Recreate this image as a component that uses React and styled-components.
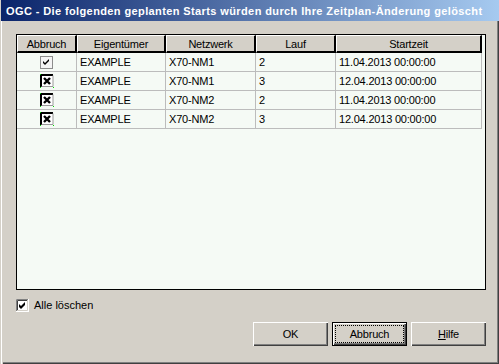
import React from 'react'
import styled, { createGlobalStyle } from 'styled-components'

const GlobalStyle = createGlobalStyle`
  html, body {
    margin: 0;
    padding: 0;
    background: #d4d0c8;
  }
  body {
    font-family: "Liberation Sans", Arial, sans-serif;
    font-size: 11px;
    color: #000;
  }
`

const Window = styled.div`
  width: 499px;
  height: 364px;
  box-sizing: border-box;
  display: flex;
  flex-direction: column;
  background: #d4d0c8;
  box-shadow: inset 1px 0 #d4d0c8, inset 2px 0 #fff, inset 3px 0 #d4d0c8,
    inset -1px -1px #404040, inset -2px -2px #808080;
  overflow: hidden;
`

const TitleBar = styled.div`
  height: 21px;
  flex: none;
  display: flex;
  align-items: center;
  padding-left: 5px;
  margin-left: 1px;
  background: linear-gradient(to right, #0a246a, #a6caf0);
  color: #fff;
  font-weight: bold;
  font-size: 11px;
  letter-spacing: 0.39px;
  white-space: nowrap;
`

const Body = styled.div`
  flex: 1;
  display: flex;
  flex-direction: column;
  padding: 13px 13px 0 16px;
`

const GridFrame = styled.div`
  width: 470px;
  height: 256px;
  box-sizing: border-box;
  border: 1px solid #000;
  background: #f5faf5;
  overflow: hidden;
`

const Table = styled.table`
  border-collapse: separate;
  border-spacing: 0;
  table-layout: fixed;
  width: 465px;
`

const HeadCell = styled.th`
  height: 15px;
  padding: 0;
  background: #d4d0c8;
  border-top: 1px solid #fff;
  border-left: 1px solid #fff;
  border-right: 2px solid #000;
  border-bottom: 2px solid #000;
  font-weight: normal;
  text-align: center;
  letter-spacing: -0.2px;
  white-space: nowrap;
`

const Cell = styled.td`
  height: 18px;
  padding: 0 0 0 ${(p) => (p.$center ? 0 : 3)}px;
  border-right: 1px solid #bcbcbc;
  border-bottom: 1px solid #bcbcbc;
  text-align: ${(p) => (p.$center ? 'center' : 'left')};
  letter-spacing: -0.2px;
  white-space: nowrap;
  vertical-align: middle;
  line-height: 0;

  & > span {
    line-height: 13px;
  }
  & > svg {
    vertical-align: middle;
  }
`

const OptionRow = styled.label`
  display: flex;
  align-items: center;
  gap: 5px;
  margin-top: 8px;
  height: 14px;
`

const ButtonRow = styled.div`
  display: flex;
  justify-content: flex-end;
  gap: 4px;
  margin-top: 10px;
`

const Button = styled.button`
  width: 75px;
  height: 24px;
  box-sizing: border-box;
  padding: 0;
  font-family: "Liberation Sans", Arial, sans-serif;
  font-size: 11px;
  letter-spacing: -0.2px;
  color: #000;
  background: #d4d0c8;
  border: none;
  position: relative;
  box-shadow: ${(p) =>
    p.$default
      ? 'inset 1px 1px #000, inset -1px -1px #000, inset 2px 2px #fff, inset -2px -2px #404040, inset -3px -3px #808080'
      : 'inset 1px 1px #fff, inset -1px -1px #404040, inset -2px -2px #808080'};

  u {
    text-decoration: underline;
  }
`

const FocusRing = styled.span`
  display: flex;
  align-items: center;
  justify-content: center;
  position: absolute;
  inset: 4px;
  outline: 1px dotted #000;
`

const rows = [
  { mark: 'check', owner: 'EXAMPLE', net: 'X70-NM1', lauf: '2', start: '11.04.2013 00:00:00' },
  { mark: 'cross', owner: 'EXAMPLE', net: 'X70-NM1', lauf: '3', start: '12.04.2013 00:00:00' },
  { mark: 'cross', owner: 'EXAMPLE', net: 'X70-NM2', lauf: '2', start: '11.04.2013 00:00:00' },
  { mark: 'cross', owner: 'EXAMPLE', net: 'X70-NM2', lauf: '3', start: '12.04.2013 00:00:00' },
]

const GreyCheck = () => (
  <svg width="13" height="13" viewBox="0 0 13 13">
    <rect x="0.5" y="0.5" width="12" height="12" fill="#f4f4f4" stroke="#8c8c8c" />
    <path d="M3 5 L5 7 L9 3 L9 5 L5 9 L3 7 Z" fill="#000" />
  </svg>
)

const CrossCheck = () => (
  <svg width="14" height="14" viewBox="0 0 14 14">
    <rect x="1" y="1" width="12" height="12" fill="#fff" />
    <path d="M1 13 V1 H13" fill="none" stroke="#000" strokeWidth="2" />
    <path d="M13 1.5 V12.5 H1.5" fill="none" stroke="#9a9a9a" strokeWidth="1" />
    <path d="M4 4 L10 10 M10 4 L4 10" stroke="#000" strokeWidth="2.4" />
    <rect x="0" y="0" width="1" height="1" fill="#00e000" />
    <rect x="0" y="13" width="1" height="1" fill="#00e000" />
    <rect x="13" y="13" width="1" height="1" fill="#00e000" />
  </svg>
)

const SunkenCheck = () => (
  <svg width="13" height="13" viewBox="0 0 13 13">
    <rect width="13" height="13" fill="#fff" />
    <path d="M0.5 12 V0.5 H12" fill="none" stroke="#808080" />
    <path d="M1.5 11 V1.5 H11" fill="none" stroke="#404040" />
    <path d="M1 11.5 H11.5 V1" fill="none" stroke="#d4d0c8" />
    <path d="M3 5 L5 7 L9 3 L9 6 L5 10 L3 8 Z" fill="#000" />
  </svg>
)

export default function App() {
  return (
    <>
      <GlobalStyle />
      <Window>
        <TitleBar>OGC - Die folgenden geplanten Starts würden durch Ihre Zeitplan-Änderung gelöscht</TitleBar>
        <Body>
          <GridFrame>
            <Table>
              <colgroup>
                <col style={{ width: 60 }} />
                <col style={{ width: 89 }} />
                <col style={{ width: 90 }} />
                <col style={{ width: 80 }} />
                <col style={{ width: 146 }} />
              </colgroup>
              <thead>
                <tr>
                  <HeadCell>Abbruch</HeadCell>
                  <HeadCell>Eigentümer</HeadCell>
                  <HeadCell>Netzwerk</HeadCell>
                  <HeadCell>Lauf</HeadCell>
                  <HeadCell>Startzeit</HeadCell>
                </tr>
              </thead>
              <tbody>
                {rows.map((r, i) => (
                  <tr key={i}>
                    <Cell $center>{r.mark === 'check' ? <GreyCheck /> : <CrossCheck />}</Cell>
                    <Cell><span>{r.owner}</span></Cell>
                    <Cell><span>{r.net}</span></Cell>
                    <Cell><span>{r.lauf}</span></Cell>
                    <Cell><span>{r.start}</span></Cell>
                  </tr>
                ))}
              </tbody>
            </Table>
          </GridFrame>
          <OptionRow>
            <SunkenCheck />
            <span>Alle löschen</span>
          </OptionRow>
          <ButtonRow>
            <Button>OK</Button>
            <Button $default>
              <FocusRing>Abbruch</FocusRing>
            </Button>
            <Button>
              <span><u>H</u>ilfe</span>
            </Button>
          </ButtonRow>
        </Body>
      </Window>
    </>
  )
}
